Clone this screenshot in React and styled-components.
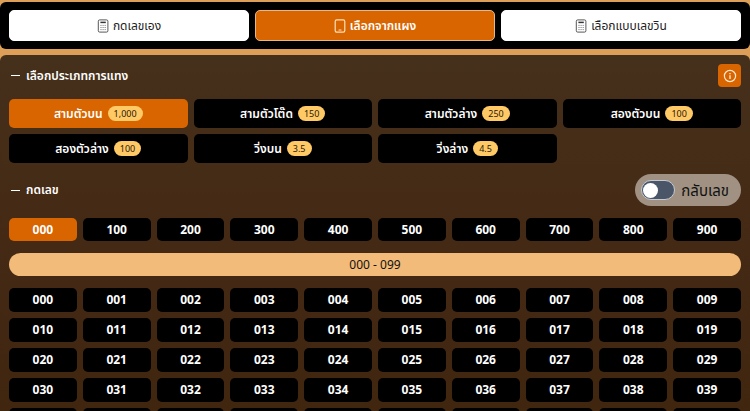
import React, { useState } from 'react';
import styled, { createGlobalStyle } from 'styled-components';

const GlobalStyle = createGlobalStyle`
  * {
    box-sizing: border-box;
  }

  html {
    scrollbar-width: none;
  }

  body {
    margin: 0;
    background: #dea058;
    font-family: 'Noto Sans', 'Noto Sans Thai', 'Open Sans', sans-serif;
  }

  button {
    font-family: inherit;
    cursor: pointer;
  }
`;

const Page = styled.main`
  padding-top: 2px;
`;

const ModeBar = styled.nav`
  display: grid;
  grid-template-columns: repeat(3, 1fr);
  gap: 6px;
  padding: 8px 9px;
  border-radius: 6px;
  background: #000;
`;

const ModeButton = styled.button`
  display: flex;
  align-items: center;
  justify-content: center;
  gap: 4px;
  height: 31px;
  padding: 0;
  border: 1px solid ${({ $active }) => ($active ? '#e6b887' : '#fff')};
  border-radius: 5px;
  background: ${({ $active }) => ($active ? '#d86500' : '#fff')};
  color: ${({ $active }) => ($active ? '#fff' : '#222')};
  font-size: 12px;
  font-weight: ${({ $active }) => ($active ? 600 : 400)};
  line-height: 16px;
`;

const Panel = styled.section`
  margin-top: 6px;
  padding: 9px;
  border-radius: 6px 6px 0 0;
  background: linear-gradient(#45301b, #452b16 150px, #40260f 360px);
`;

const SectionHeader = styled.header`
  display: flex;
  align-items: center;
  justify-content: space-between;
`;

const SectionTitle = styled.h2`
  display: flex;
  align-items: center;
  gap: 6px;
  margin: 0 0 0 2px;
  color: #fff;
  font-size: 12px;
  font-weight: 600;
  line-height: 16px;

  &::before {
    content: '';
    width: 9px;
    height: 1px;
    background: #fff;
  }
`;

const InfoButton = styled.button`
  display: flex;
  align-items: center;
  justify-content: center;
  width: 23px;
  height: 23px;
  padding: 0;
  border: 0;
  border-radius: 4px;
  background: #d86500;
  color: #ffe9cf;
`;

const TypeGrid = styled.div`
  display: grid;
  grid-template-columns: repeat(4, 1fr);
  gap: 6px;
  margin: 12px 0 11px;
`;

const TypeButton = styled.button`
  display: flex;
  align-items: center;
  justify-content: center;
  gap: 5px;
  height: 29px;
  padding: 0;
  border: 0;
  border-radius: 5px;
  background: ${({ $active }) => ($active ? '#d86500' : '#000')};
  color: #fff;
  font-size: 12px;
  font-weight: 600;
  line-height: 16px;
`;

const Rate = styled.span`
  padding: 0 6px;
  border-radius: 8px;
  background: #ffc966;
  color: #2b1a08;
  font-size: 9px;
  font-weight: 400;
  line-height: 15px;
`;

const ReverseLabel = styled.label`
  display: flex;
  align-items: center;
  gap: 6px;
  height: 32px;
  padding: 0 12px 0 6px;
  border-radius: 16px;
  background: #a09182;
  color: #111;
  font-size: 15px;
  line-height: 20px;
  cursor: pointer;
`;

const Switch = styled.input`
  display: flex;
  align-items: center;
  appearance: none;
  width: 34px;
  height: 20px;
  margin: 0;
  padding: 0 1px;
  border: 1px solid #c5cad2;
  border-radius: 10px;
  background: #4a5568;
  cursor: pointer;

  &::before {
    content: '';
    width: 15px;
    height: 15px;
    border-radius: 50%;
    background: #fff;
  }

  &:checked {
    justify-content: flex-end;
    background: #d86500;
  }
`;

const NumberGrid = styled.div`
  display: grid;
  grid-template-columns: repeat(10, 1fr);
  gap: 6px;
`;

const NumberButton = styled.button`
  height: 24px;
  padding: 0;
  border: 0;
  border-radius: 5px;
  background: ${({ $active }) => ($active ? '#d86500' : '#000')};
  color: #fff;
  font-size: 12px;
  font-weight: 700;
  line-height: 16px;
`;

const HundredGrid = styled(NumberGrid)`
  margin-top: 12px;
`;

const HundredButton = styled(NumberButton)`
  height: 23px;
`;

const RangeBar = styled.div`
  margin: 12px 0;
  border-radius: 12px;
  background: #f2bb79;
  color: #111;
  font-size: 12px;
  line-height: 23px;
  text-align: center;
`;

const CalculatorIcon = () => (
  <svg width="12" height="14" viewBox="0 0 12 14" fill="none" aria-hidden="true">
    <rect x="1.3" y="0.9" width="9.6" height="12.2" rx="1.4" stroke="#444" strokeWidth="0.9" />
    <path d="M3.4 3.4h5.4" stroke="#333" strokeWidth="1.5" />
    <path
      d="M3.4 6.4h1.2M5.5 6.4h1.2M7.6 6.4h1.2M3.4 8.5h1.2M5.5 8.5h1.2M7.6 8.5h1.2M3.4 10.6h1.2M5.5 10.6h1.2M7.6 10.6h1.2"
      stroke="#888"
    />
  </svg>
);

const TabletIcon = () => (
  <svg width="12" height="14" viewBox="0 0 12 14" fill="none" aria-hidden="true">
    <rect x="1.2" y="0.8" width="9.6" height="12.4" rx="1.6" stroke="#ffe0bb" strokeWidth="1.2" />
    <path d="M5 11h2" stroke="#ffe0bb" strokeWidth="1.2" strokeLinecap="round" />
  </svg>
);

const InfoIcon = () => (
  <svg width="14" height="14" viewBox="0 0 14 14" fill="none" aria-hidden="true">
    <circle cx="7" cy="7" r="5.6" stroke="currentColor" strokeWidth="1.2" />
    <path d="M7 6.2v3.7M7 4v1.2" stroke="currentColor" strokeWidth="1.4" />
  </svg>
);

const MODES = [
  { label: 'กดเลขเอง', Icon: CalculatorIcon },
  { label: 'เลือกจากแผง', Icon: TabletIcon },
  { label: 'เลือกแบบเลขวิน', Icon: CalculatorIcon },
];

const TYPES = [
  { label: 'สามตัวบน', rate: '1,000' },
  { label: 'สามตัวโต๊ด', rate: '150' },
  { label: 'สามตัวล่าง', rate: '250' },
  { label: 'สองตัวบน', rate: '100' },
  { label: 'สองตัวล่าง', rate: '100' },
  { label: 'วิ่งบน', rate: '3.5' },
  { label: 'วิ่งล่าง', rate: '4.5' },
];

const pad = (n) => String(n).padStart(3, '0');

export default function App() {
  const [mode, setMode] = useState(1);
  const [type, setType] = useState(0);
  const [hundred, setHundred] = useState(0);
  const [reverse, setReverse] = useState(false);
  const [picked, setPicked] = useState([]);

  const toggleNumber = (n) =>
    setPicked(picked.includes(n) ? picked.filter((p) => p !== n) : [...picked, n]);

  return (
    <>
      <GlobalStyle />
      <Page>
        <ModeBar>
          {MODES.map(({ label, Icon }, i) => (
            <ModeButton key={label} $active={mode === i} onClick={() => setMode(i)}>
              <Icon />
              {label}
            </ModeButton>
          ))}
        </ModeBar>
        <Panel>
          <SectionHeader>
            <SectionTitle>เลือกประเภทการแทง</SectionTitle>
            <InfoButton aria-label="info">
              <InfoIcon />
            </InfoButton>
          </SectionHeader>
          <TypeGrid>
            {TYPES.map(({ label, rate }, i) => (
              <TypeButton key={label} $active={type === i} onClick={() => setType(i)}>
                {label}
                <Rate>{rate}</Rate>
              </TypeButton>
            ))}
          </TypeGrid>
          <SectionHeader>
            <SectionTitle>กดเลข</SectionTitle>
            <ReverseLabel htmlFor="reverse">
              <Switch
                id="reverse"
                type="checkbox"
                checked={reverse}
                onChange={() => setReverse(!reverse)}
              />
              กลับเลข
            </ReverseLabel>
          </SectionHeader>
          <HundredGrid>
            {Array.from({ length: 10 }, (_, i) => (
              <HundredButton key={i} $active={hundred === i} onClick={() => setHundred(i)}>
                {pad(i * 100)}
              </HundredButton>
            ))}
          </HundredGrid>
          <RangeBar>
            {pad(hundred * 100)} - {pad(hundred * 100 + 99)}
          </RangeBar>
          <NumberGrid>
            {Array.from({ length: 100 }, (_, i) => hundred * 100 + i).map((n) => (
              <NumberButton key={n} $active={picked.includes(n)} onClick={() => toggleNumber(n)}>
                {pad(n)}
              </NumberButton>
            ))}
          </NumberGrid>
        </Panel>
      </Page>
    </>
  );
}
